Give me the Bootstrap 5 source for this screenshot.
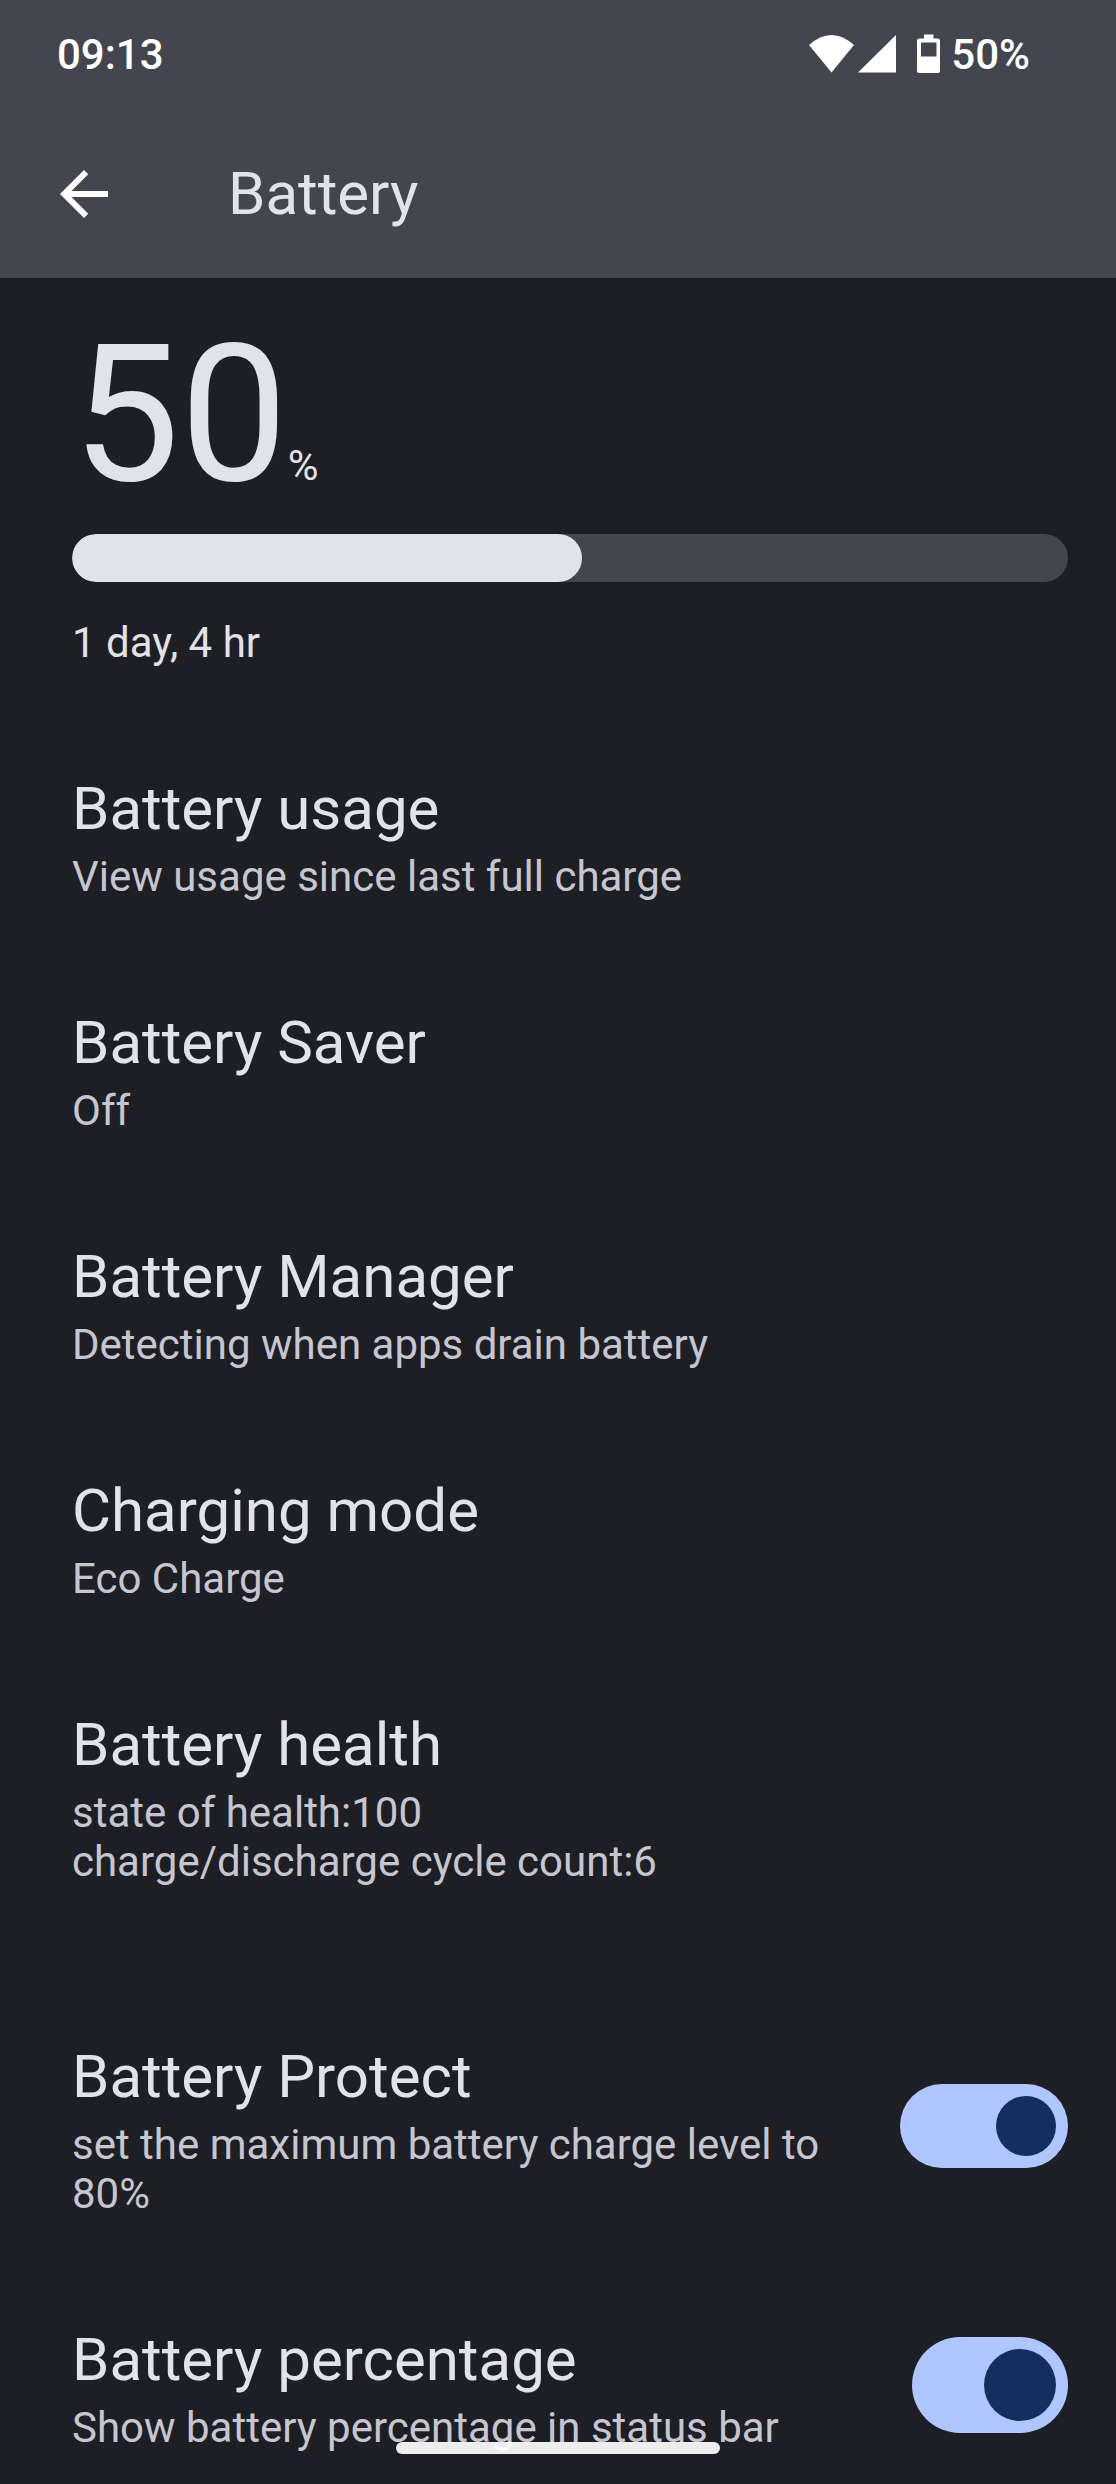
<!DOCTYPE html>
<html lang="en" data-bs-theme="dark">
<head>
<meta charset="utf-8">
<meta name="viewport" content="width=device-width, initial-scale=1">
<title>Battery</title>
<link rel="stylesheet" href="https://cdn.jsdelivr.net/npm/bootstrap@5.3.0/dist/css/bootstrap.min.css">
<style>
  body { background: #1e1f25; color: #e2e2e9; font-family: Roboto, sans-serif; font-size: 42px; line-height: 49px; }
  .top-area { background: #44464f; }
  .status-bar { height: 110px; padding: 0 86px 2px 57px; color: #fff; font-weight: 500; }
  .status-icons { gap: 10px; }
  .app-bar { height: 168px; padding: 0 48px 0 48px; gap: 108px; }
  .back-btn { color: #fff; line-height: 0; }
  .screen-title, .pref-title { font-size: 60px; line-height: 70px; font-weight: 400; color: #e2e2e9; }
  .summary { padding: 41px 48px 53px 72px; }
  .level { font-size: 192px; line-height: 192px; }
  .level-unit { font-size: 42px; line-height: 49px; }
  .level-track { height: 48px; margin: 23px 0 36px; border-radius: 24px; background: #44464f; }
  .level-fill { border-radius: 24px; background: #e2e2e9; }
  .pref-list { --bs-list-group-bg: transparent; --bs-list-group-border-width: 0; }
  .pref { padding: 54px 48px 53px 72px; gap: 48px; background: transparent; border: 0; }
  .pref-title { margin-bottom: 8px; }
  .pref-note { color: #c5c6d0; }
  .pref-last { padding-bottom: 32px; }
  .form-check-input.toggle { float: none; flex: none; display: flex; justify-content: flex-end; width: 168px; height: 84px; margin: 0 0 8px; padding: 12px; border: 0; border-radius: 48px; background: #44464f; }
  .form-check-input.toggle::before { content: ""; height: 100%; aspect-ratio: 1; border-radius: 50%; background: #152e60; }
  .form-check-input.toggle:checked { background: #b0c6ff; }
  .form-check-input.toggle-tall { width: 156px; height: 96px; }
  .toggle:not(:checked) { justify-content: flex-start; }
  .home-handle { bottom: 30px; width: 324px; height: 12px; border-radius: 6px; background: rgba(255,255,255,.92); }
</style>
</head>
<body>
<header class="top-area">
  <div class="status-bar d-flex align-items-center justify-content-between">
    <span>09:13</span>
    <div class="status-icons d-flex align-items-center">
      <svg width="132" height="40" viewBox="0 0 132 40" fill="#fff" aria-hidden="true">
        <path d="M0 11Q22.500 -9 45 11L22.500 38.500Z"/>
        <path d="M49 38.500L87 1V38.500Z"/>
        <path fill-rule="evenodd" d="M115 0.500h9.500v4h4q2.500 0 2.500 2.500v30q0 2-2 2h-19q-2 0-2-2v-30q0-2.500 2.500-2.500h4.500zM112 8.500v14h15.500v-14z"/>
      </svg>
      <span>50%</span>
    </div>
  </div>
  <div class="app-bar d-flex align-items-center">
    <button type="button" class="back-btn btn border-0 p-0" aria-label="Navigate up">
      <svg width="72" height="72" viewBox="0 0 24 24" fill="currentColor" aria-hidden="true"><path d="M20 11H7.830l5.590-5.590L12 4l-8 8 8 8 1.410-1.410L7.830 13H20z"/></svg>
    </button>
    <h1 class="screen-title mb-0">Battery</h1>
  </div>
</header>
<main>
  <section class="summary">
    <div class="d-flex align-items-baseline"><span class="level">50</span><span class="level-unit">%</span></div>
    <div class="level-track progress" role="progressbar" aria-label="Battery level" aria-valuenow="50" aria-valuemin="0" aria-valuemax="100">
      <div class="level-fill progress-bar" style="width: 51.2%"></div>
    </div>
    <p class="mb-0">1 day, 4 hr</p>
  </section>
  <div class="pref-list list-group list-group-flush">
    <a href="#" class="pref list-group-item"><h2 class="pref-title">Battery usage</h2><p class="pref-note mb-0">View usage since last full charge</p></a>
    <a href="#" class="pref list-group-item"><h2 class="pref-title">Battery Saver</h2><p class="pref-note mb-0">Off</p></a>
    <a href="#" class="pref list-group-item"><h2 class="pref-title">Battery Manager</h2><p class="pref-note mb-0">Detecting when apps drain battery</p></a>
    <a href="#" class="pref list-group-item"><h2 class="pref-title">Charging mode</h2><p class="pref-note mb-0">Eco Charge</p></a>
    <a href="#" class="pref list-group-item"><h2 class="pref-title">Battery health</h2><p class="pref-note mb-0">state of health:100<br>charge/discharge cycle count:6<br>&nbsp;</p></a>
    <div class="pref list-group-item d-flex align-items-center">
      <label class="flex-fill" for="protect"><span class="pref-title d-block">Battery Protect</span><span class="pref-note d-block">set the maximum battery charge level to 80%</span></label>
      <input class="toggle form-check-input" type="checkbox" role="switch" id="protect" checked>
    </div>
    <div class="pref pref-last list-group-item d-flex align-items-center">
      <label class="flex-fill" for="percentage"><span class="pref-title d-block">Battery percentage</span><span class="pref-note d-block">Show battery percentage in status bar</span></label>
      <input class="toggle toggle-tall form-check-input" type="checkbox" role="switch" id="percentage" checked>
    </div>
  </div>
</main>
<div class="home-handle position-fixed start-50 translate-middle-x"></div>
<script src="https://cdn.jsdelivr.net/npm/bootstrap@5.3.0/dist/js/bootstrap.bundle.min.js"></script>
</body>
</html>
